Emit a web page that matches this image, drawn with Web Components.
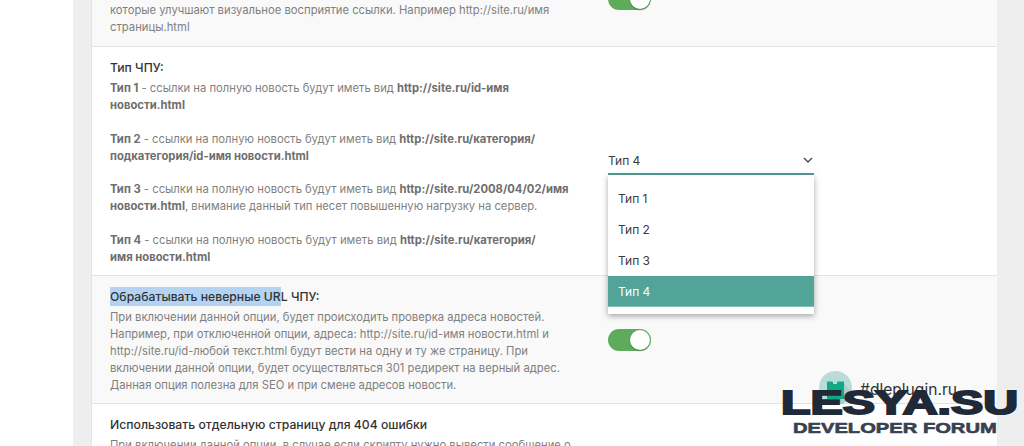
<!DOCTYPE html>
<html lang="ru">
<head>
<meta charset="utf-8">
<style>
  html, body { margin: 0; padding: 0; background: #fff; height: 446px; overflow: hidden; }
  body { font-family: "Inter", "Liberation Sans", sans-serif; }
  b { color: #6e6e6e; }
</style>
</head>
<body>
<admin-page>
  <setting-row tail shaded toggle>
    <div slot="desc">которые улучшают визуальное восприятие ссылки. Например http://site.ru/имя страницы.html</div>
  </setting-row>
  <setting-row>
    <span slot="title">Тип ЧПУ:</span>
    <div slot="desc">
      <b>Тип 1</b> - ссылки на полную новость будут иметь вид <b>http://site.ru/id-имя новости.html</b><br><br>
      <b>Тип 2</b> - ссылки на полную новость будут иметь вид <b>http://site.ru/категория/подкатегория/id-имя новости.html</b><br><br>
      <b>Тип 3</b> - ссылки на полную новость будут иметь вид <b>http://site.ru/2008/04/02/имя новости.html</b>, внимание данный тип несет повышенную нагрузку на сервер.<br><br>
      <b>Тип 4</b> - ссылки на полную новость будут иметь вид <b>http://site.ru/категория/<br>имя новости.html</b>
    </div>
    <type-select slot="control"></type-select>
  </setting-row>
  <setting-row shaded toggle>
    <span slot="title"><mark style="background:#b4d3f2;color:inherit;padding:2px 0">Обрабатывать неверные UR</mark>L ЧПУ:</span>
    <div slot="desc">При включении данной опции, будет происходить проверка адреса новостей. Например, при отключенной опции, адреса: http://site.ru/id-имя новости.html и http://site.ru/id-любой текст.html будут вести на одну и ту же страницу. При включении данной опции, будет осуществляться 301 редирект на верный адрес. Данная опция полезна для SEO и при смене адресов новости.</div>
  </setting-row>
  <setting-row>
    <span slot="title">Использовать отдельную страницу для 404 ошибки</span>
    <div slot="desc">При включении данной опции, в случае если скрипту нужно вывести сообщение о</div>
  </setting-row>
</admin-page>
<forum-badge></forum-badge>

<script>
class AdminPage extends HTMLElement {
  connectedCallback() {
    this.attachShadow({ mode: 'open' }).innerHTML = `
    <style>
      :host { display: block; height: 446px; overflow: hidden; padding-left: 73px; }
      .frame { background: #eee; padding: 0 27px 0 18px; height: 446px; }
      .panel { background: #fff; border-left: 1px solid #e4e4e4; height: 446px; overflow: hidden; }
    </style>
    <div class="frame"><div class="panel"><slot></slot></div></div>`;
  }
}

class SettingRow extends HTMLElement {
  connectedCallback() {
    this.attachShadow({ mode: 'open' }).innerHTML = `
    <style>
      :host { display: flex; box-sizing: border-box; padding: 12px 18px 9px; border-bottom: 1px solid #e3e3e3; background: #fff; color: #7f7f7f; }
      :host([shaded]) { background: #f9f9f9; }
      :host([tail]) { padding-top: 2px; height: 47px; }
      .text { width: 465px; margin-right: 33px; flex: none; font-size: 11.25px; line-height: 16.9px; }
      .title { color: #333; font-size: 12.2px; font-weight: 500; line-height: 18px; margin-bottom: 3px; }
      .ctl { flex: 1; display: flex; align-items: center; position: relative; padding-bottom: 2px; }
      :host([tail]) .title { display: none; }
      .sw { width: 43px; height: 22px; border-radius: 11px; background: #5fab5c; position: relative; }
      .sw::after { content: ""; position: absolute; right: 1px; top: 1px; width: 20px; height: 20px; border-radius: 50%; background: #fff; box-shadow: 0 1px 2px rgba(0,0,0,.25); }
      :host([tail]) .sw { position: absolute; left: 0; top: -14px; }
    </style>
    <div class="text">
      <div class="title"><slot name="title"></slot></div>
      <div class="desc"><slot name="desc"></slot></div>
    </div>
    <div class="ctl">
      ${this.hasAttribute('toggle') ? '<div class="sw"></div>' : ''}
      <slot name="control"></slot>
    </div>`;
  }
}

class TypeSelect extends HTMLElement {
  connectedCallback() {
    const items = ['Тип 1', 'Тип 2', 'Тип 3', 'Тип 4'];
    this.attachShadow({ mode: 'open' }).innerHTML = `
    <style>
      :host { display: block; width: 206px; position: relative; color: #3c3c3c; font-size: 12px; }
      .head { display: flex; justify-content: space-between; align-items: center; height: 27px; box-sizing: border-box; border-bottom: 2px solid #4e9f95; }
      svg { margin-right: 1px; }
      .menu { position: absolute; left: 0; right: 0; top: 27px; background: #fff; padding: 8px 0 7px; box-shadow: 0 2px 6px rgba(0,0,0,.35); z-index: 2; }
      .item { height: 31px; line-height: 31px; padding-left: 10px; box-sizing: border-box; }
      .item.on { background: #52a398; color: #fff; border-bottom: 1px solid #86c0b8; }
    </style>
    <div class="head"><span>Тип 4</span>
      <svg width="10" height="6" viewBox="0 0 10 6"><path d="M1 1l4 4 4-4" fill="none" stroke="#444" stroke-width="1.3"/></svg>
    </div>
    <div class="menu">${items.map(t => `<div class="item${t === 'Тип 4' ? ' on' : ''}">${t}</div>`).join('')}</div>`;
  }
}

class ForumBadge extends HTMLElement {
  connectedCallback() {
    this.attachShadow({ mode: 'open' }).innerHTML = `
    <style>
      :host { display: block; position: absolute; left: 781px; top: 370px; width: 240px; height: 70px; font-family: "Liberation Sans", sans-serif; }
      .logo { position: absolute; left: 38px; top: 1px; }
      .tag { position: absolute; left: 79px; top: 10px; font: 15.6px "Inter", sans-serif; color: #333; white-space: nowrap; }
      .big { position: absolute; left: 0; top: 14px; font-weight: 700; font-size: 34px; line-height: 36px; color: #1f2937; -webkit-text-stroke: 2px #1f2937; transform-origin: 0 0; transform: scaleX(1.42); white-space: nowrap; }
      .small { position: absolute; left: 12px; top: 50px; font-weight: 700; font-size: 15.5px; line-height: 16px; color: #374151; -webkit-text-stroke: .6px #374151; transform-origin: 0 0; transform: scaleX(1.3); white-space: nowrap; }
    </style>
    <svg class="logo" width="33" height="33" viewBox="0 0 33 33">
      <circle cx="16.5" cy="16.5" r="16.5" fill="#b9dcd8"/>
      <path d="M25 13L33 21V26L24 33H16L8 28Z" fill="#a9cfcb"/>
      <path d="M8 14V11.5A1 1 0 0 1 9 10.500H13A1 1 0 0 1 14 11.500V13H18V11.500A1 1 0 0 1 19 10.500H24A1 1 0 0 1 25 11.500V28H8Z" fill="#10a983"/>
    </svg>
    <div class="tag">#dleplugin.ru</div>
    <div class="big">LESYA.SU</div>
    <div class="small">DEVELOPER FORUM</div>`;
  }
}

customElements.define('admin-page', AdminPage);
customElements.define('setting-row', SettingRow);
customElements.define('type-select', TypeSelect);
customElements.define('forum-badge', ForumBadge);
</script>
</body>
</html>
